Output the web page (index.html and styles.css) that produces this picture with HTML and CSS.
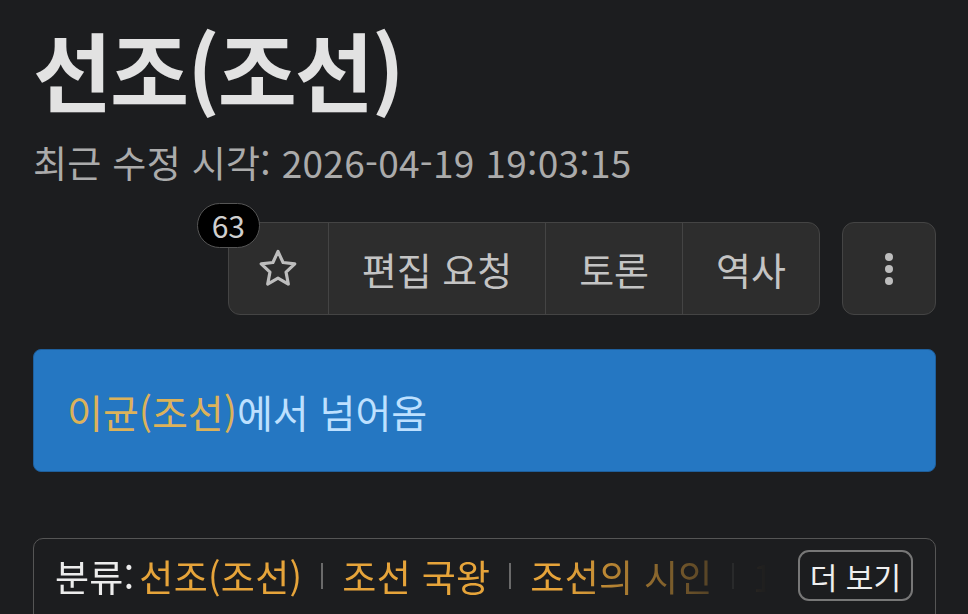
FILE: index.html
```html
<!doctype html>
<html lang="ko">

<head>
    <meta charset="utf-8">
    <title>선조(조선)</title>
    <link rel="stylesheet" href="styles.css">
</head>

<body>
    <div class="page">
        <h1 class="title">선조(조선)</h1>
        <div class="meta">최근 수정 시각: 2026-04-19 19:03:15</div>

        <div class="toolbar">
            <div class="btnGroup">
                <span class="starCount">63</span>
                <a class="btn starBtn" href="#">
                    <svg width="42" height="42" viewBox="0 0 24 24" fill="none" stroke="currentColor" stroke-width="1.8" stroke-linejoin="round">
                        <polygon points="12 2 14.9 8.3 21.6 9.1 16.6 13.8 17.9 20.6 12 17.2 6.1 20.6 7.4 13.8 2.4 9.1 9.1 8.3"/>
                    </svg>
                </a>
                <a class="btn" href="#">편집 요청</a>
                <a class="btn" href="#">토론</a>
                <a class="btn" href="#">역사</a>
            </div>
            <a class="moreBtn" href="#">
                <span class="dot"></span>
                <span class="dot"></span>
                <span class="dot"></span>
            </a>
        </div>

        <div class="redirect">
            <a href="#">이균(조선)</a>에서 넘어옴
        </div>

        <div class="categories">
            <div class="catList">
                <span class="catLabel">분류:</span>
                <a href="#">선조(조선)</a>
                <span class="sep"></span>
                <a href="#">조선 국왕</a>
                <span class="sep"></span>
                <a href="#">조선의 시인</a>
                <span class="sep"></span>
                <a class="lastCat" href="#">1552년 출생</a>
            </div>
            <button class="moreCats">더 보기</button>
        </div>
    </div>
</body>

</html>
```

FILE: styles.css
```css
* {
    margin: 0;
    padding: 0;
    box-sizing: border-box;
}

body {
    background-color: #1c1d1f;
    color: #e0e0e0;
    font-family: "Noto Sans CJK KR", "Noto Sans", sans-serif;
    overflow: hidden;
}

a {
    text-decoration: none;
    color: inherit;
}

.page {
    padding: 15px 32px 0 33px;
}

.title {
    font-size: 86px;
    font-weight: 700;
    line-height: 108px;
    letter-spacing: -2px;
    color: #e2e2e2;
}

.meta {
    font-size: 37px;
    line-height: 48px;
    letter-spacing: 0.3px;
    color: #ababab;
    margin-top: 15px;
}

.toolbar {
    display: flex;
    justify-content: flex-end;
    gap: 22px;
    margin-top: 36px;
}

.btnGroup {
    position: relative;
    display: flex;
    height: 93px;
    border: solid 1px #444;
    border-radius: 12px;
    background-color: #2d2d2d;
}

.btn {
    display: flex;
    align-items: center;
    justify-content: center;
    padding: 0 33px;
    font-size: 38px;
    color: #c4c4c4;
    border-left: solid 1px #444;
}

.btn:first-of-type {
    border-left: none;
}

.starBtn {
    width: 99px;
    padding: 0;
    color: #bdbdbd;
}

.starCount {
    position: absolute;
    left: -32px;
    top: -20px;
    height: 45px;
    padding: 0 14px;
    border: solid 1px #555;
    border-radius: 23px;
    background-color: #000;
    color: #cfcfcf;
    font-size: 30px;
    line-height: 42px;
}

.moreBtn {
    display: flex;
    flex-direction: column;
    align-items: center;
    justify-content: center;
    gap: 4px;
    width: 94px;
    height: 93px;
    border: solid 1px #444;
    border-radius: 12px;
    background-color: #2d2d2d;
}

.dot {
    width: 8px;
    height: 8px;
    border-radius: 50%;
    background-color: #bdbdbd;
}

.redirect {
    margin-top: 34px;
    height: 123px;
    display: flex;
    align-items: center;
    padding-left: 33px;
    background-color: #2577c2;
    border: solid 1px #1e5f9c;
    border-radius: 8px;
    font-size: 39px;
    color: #bde0ff;
}

.redirect a {
    color: #dcb25a;
}

.categories {
    margin-top: 66px;
    height: 90px;
    display: flex;
    align-items: flex-start;
    gap: 16px;
    padding: 11px 22px 0 21px;
    border: solid 1px #555;
    border-radius: 10px;
}

.catList {
    flex: 1;
    min-width: 0;
    display: flex;
    align-items: center;
    gap: 19px;
    height: 51px;
    font-size: 37px;
    letter-spacing: 0.3px;
    white-space: nowrap;
    overflow: hidden;
    -webkit-mask-image: linear-gradient(to right, #000 70%, transparent 98%);
    mask-image: linear-gradient(to right, #000 70%, transparent 98%);
}

.catLabel {
    color: #ececec;
    margin-right: -14px;
}

.catList a {
    flex-shrink: 0;
    color: #e6a43a;
}

.catList .lastCat {
    flex-shrink: 1;
    min-width: 0;
    overflow: hidden;
}

.sep {
    flex-shrink: 0;
    width: 2px;
    height: 26px;
    background-color: #6a6a6a;
}

.moreCats {
    flex-shrink: 0;
    height: 51px;
    padding: 0 10px;
    background: none;
    border: solid 2px #777;
    border-radius: 11px;
    color: #efefef;
    font-family: inherit;
    font-size: 30px;
}
```
